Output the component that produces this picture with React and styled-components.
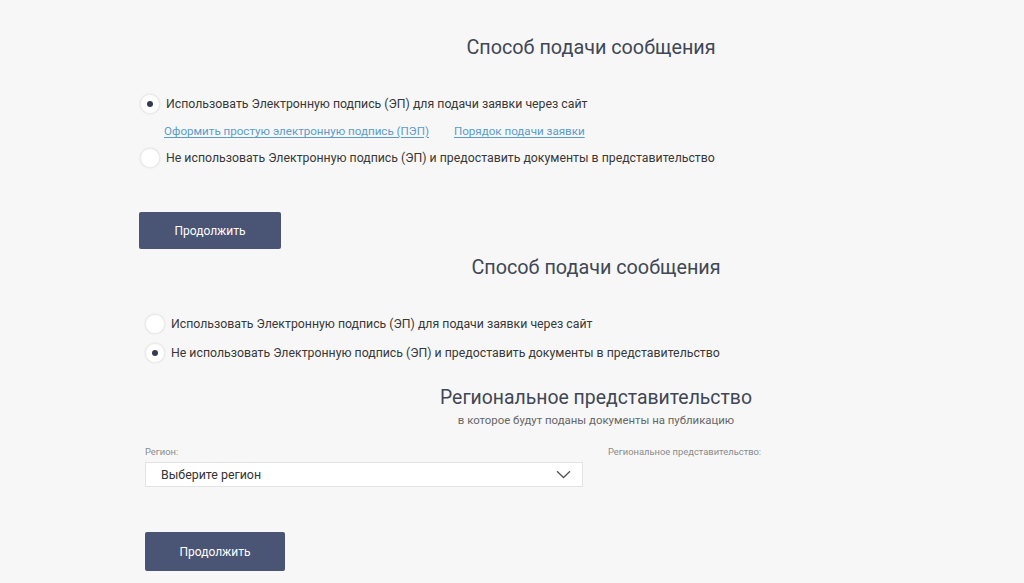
import React from "react";
import styled, { createGlobalStyle } from "styled-components";

const Global = createGlobalStyle`
  html, body { margin: 0; padding: 0; background: #f7f7f7; overflow: hidden; }
  body { font-family: Roboto, "Noto Sans", sans-serif; color: #333; }
`;

const Page = styled.div`
  width: 1024px;
  height: 583px;
  overflow: hidden;
  background: #f7f7f7;
`;

const Section = styled.section`
  width: 902px;
  margin-left: ${(p) => p.$left}px;
  padding-top: ${(p) => p.$top || 0}px;
  display: flex;
  flex-direction: column;
`;

const Title = styled.h2`
  margin: 0;
  margin-top: ${(p) => p.$mt || 0}px;
  text-align: center;
  font-weight: 400;
  font-size: ${(p) => p.$size || 19.8}px;
  line-height: 24px;
  color: #414755;
`;

const Subtitle = styled.div`
  margin-top: 3px;
  text-align: center;
  font-size: 11.4px;
  line-height: 14px;
  color: #666;
`;

const Options = styled.div`
  display: flex;
  flex-direction: column;
  margin-top: 34px;
  gap: 9px;
`;

const OptionRow = styled.label`
  display: flex;
  align-items: center;
  gap: 6px;
  height: 20px;
  font-size: 12.3px;
  color: #383838;
  cursor: pointer;
`;

const Radio = styled.span`
  width: 20px;
  height: 20px;
  flex: none;
  box-sizing: border-box;
  border-radius: 50%;
  background: #fff;
  border: 1px solid #ececec;
  box-shadow: 0 0 2px rgba(0, 0, 0, 0.12);
  display: flex;
  align-items: center;
  justify-content: center;
  &::after {
    content: "";
    width: 6px;
    height: 6px;
    border-radius: 50%;
    background: ${(p) => (p.$checked ? "#363b52" : "transparent")};
  }
`;

const Links = styled.div`
  display: flex;
  gap: 25px;
  padding-left: 24px;
  height: 16px;
  align-items: center;
`;

const Link = styled.a`
  font-size: 11.6px;
  color: #5b9ccc;
  text-decoration: underline;
  text-underline-offset: 2px;
  cursor: pointer;
`;

const Button = styled.button`
  align-self: flex-start;
  margin-top: ${(p) => p.$mt}px;
  margin-left: ${(p) => p.$ml || 0}px;
  width: ${(p) => p.$w}px;
  height: ${(p) => p.$h}px;
  background: #4a5475;
  color: #fff;
  border: none;
  border-radius: 2px;
  font-family: Roboto, sans-serif;
  font-size: 12px;
  cursor: pointer;
`;

const Fields = styled.div`
  display: grid;
  grid-template-columns: 438px 438px;
  column-gap: 25px;
  margin-top: 19px;
`;

const Field = styled.div`
  display: flex;
  flex-direction: column;
  gap: 4px;
`;

const FieldLabel = styled.div`
  font-size: 9.4px;
  line-height: 12px;
  color: #8a8a8a;
`;

const Select = styled.div`
  height: 25px;
  box-sizing: border-box;
  background: #fff;
  border: 1px solid #e3e3e3;
  display: flex;
  align-items: center;
  justify-content: space-between;
  padding: 0 11px 0 15px;
  font-size: 12.4px;
  color: #333;
`;

const Chevron = () => (
  <svg width="15" height="9" viewBox="0 0 15 9" fill="none">
    <path d="M1 1.2 L7.5 7.5 L14 1.2" stroke="#555" strokeWidth="1.3" />
  </svg>
);

export default function App() {
  return (
    <Page>
      <Global />
      <Section $left={140} $top={36}>
        <Title>Способ подачи сообщения</Title>
        <Options>
          <OptionRow>
            <Radio $checked />
            Использовать Электронную подпись (ЭП) для подачи заявки через сайт
          </OptionRow>
          <Links>
            <Link>Оформить простую электронную подпись (ПЭП)</Link>
            <Link>Порядок подачи заявки</Link>
          </Links>
          <OptionRow>
            <Radio />
            Не использовать Электронную подпись (ЭП) и предоставить документы в представительство
          </OptionRow>
        </Options>
        <Button $mt={44} $ml={-1} $w={142} $h={37}>Продолжить</Button>
      </Section>
      <Section $left={145} $top={7}>
        <Title>Способ подачи сообщения</Title>
        <Options>
          <OptionRow>
            <Radio />
            Использовать Электронную подпись (ЭП) для подачи заявки через сайт
          </OptionRow>
          <OptionRow>
            <Radio $checked />
            Не использовать Электронную подпись (ЭП) и предоставить документы в представительство
          </OptionRow>
        </Options>
        <Title as="h3" $size={19.4} $mt={23}>
          Региональное представительство
        </Title>
        <Subtitle>в которое будут поданы документы на публикацию</Subtitle>
        <Fields>
          <Field>
            <FieldLabel>Регион:</FieldLabel>
            <Select>
              Выберите регион
              <Chevron />
            </Select>
          </Field>
          <Field>
            <FieldLabel>Региональное представительство:</FieldLabel>
          </Field>
        </Fields>
        <Button $mt={45} $w={140} $h={39}>Продолжить</Button>
      </Section>
    </Page>
  );
}
